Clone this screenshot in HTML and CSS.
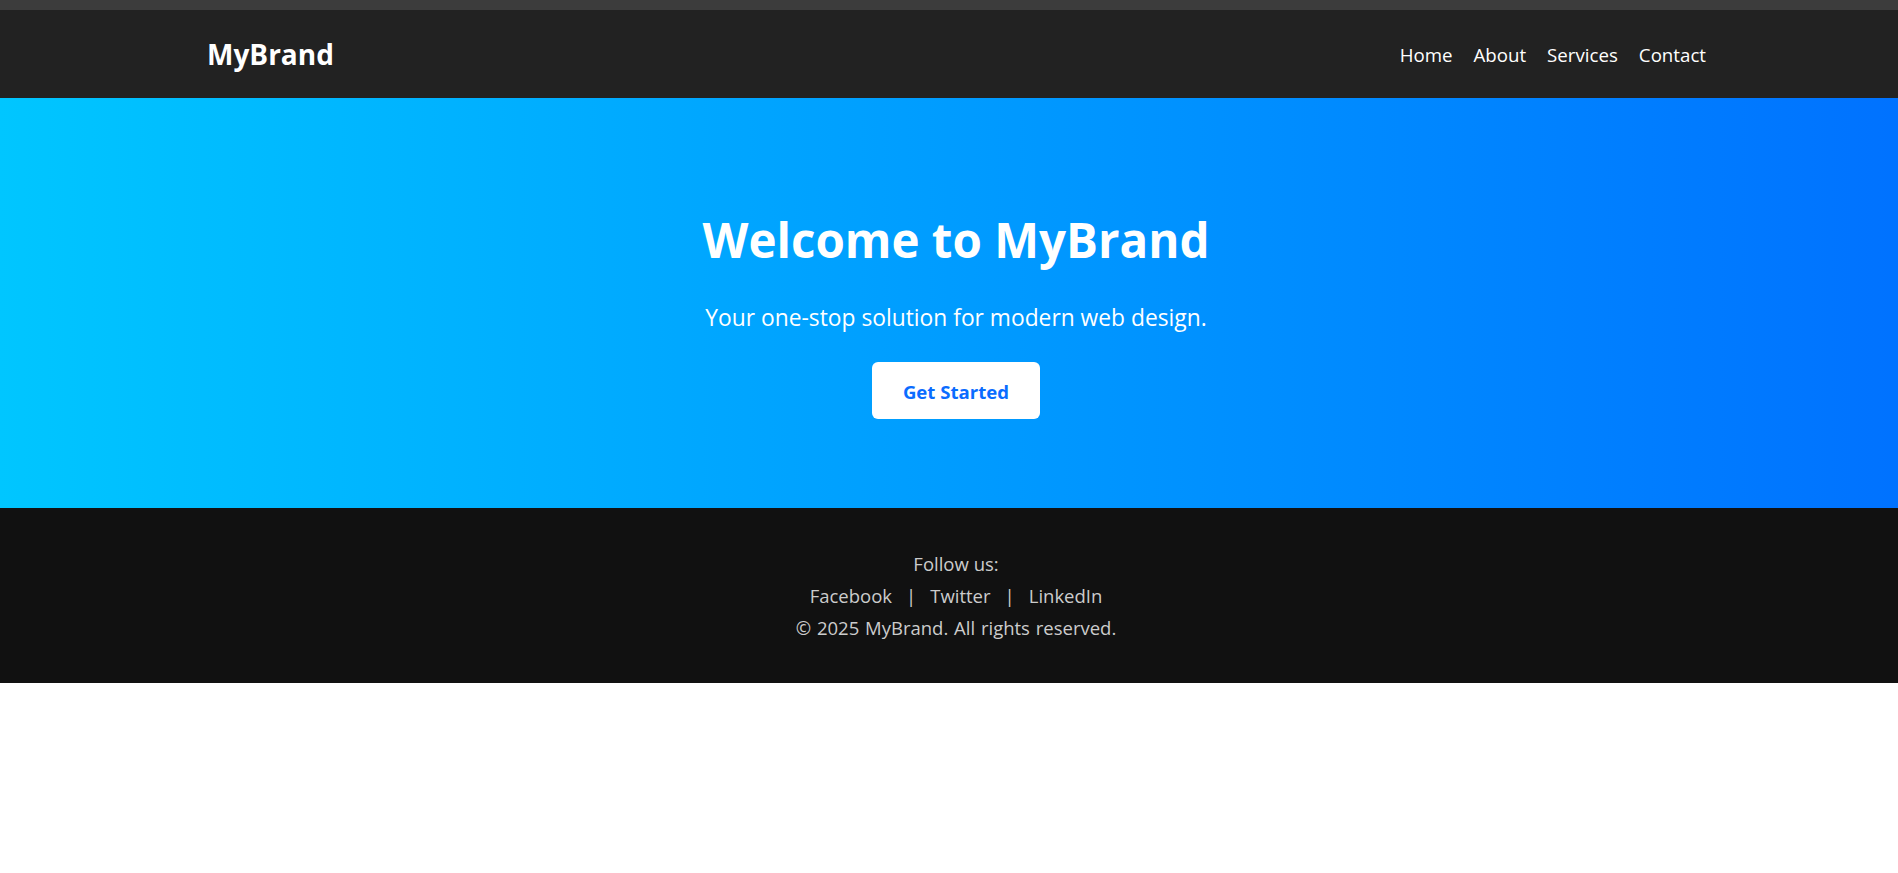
FILE: index.html
```html
<!DOCTYPE html>
<html lang="en">
<head>
<meta charset="utf-8">
<title>MyBrand</title>
<link rel="stylesheet" href="styles.css">
</head>
<body>
<div class="topstrip"></div>
<header class="site-header">
  <div class="logo">MyBrand</div>
  <nav class="nav">
    <a href="#">Home</a>
    <a href="#">About</a>
    <a href="#">Services</a>
    <a href="#">Contact</a>
  </nav>
</header>
<section class="hero">
  <h1 class="hero-title">Welcome to MyBrand</h1>
  <p class="hero-sub">Your one-stop solution for modern web design.</p>
  <a href="#" class="btn">Get Started</a>
</section>
<footer class="site-footer">
  <p class="footer-line">Follow us:</p>
  <p class="footer-line social">
    <a href="#">Facebook</a><span class="sep">|</span><a href="#">Twitter</a><span class="sep">|</span><a href="#">LinkedIn</a>
  </p>
  <p class="footer-line copyright">© 2025 MyBrand. All rights reserved.</p>
</footer>
</body>
</html>
```
FILE: styles.css
```css
* { box-sizing: border-box; }
html, body { margin: 0; padding: 0; }
body {
  font-family: "Open Sans", "Noto Sans", sans-serif;
  background: #ffffff;
  color: #ffffff;
}
a { text-decoration: none; color: inherit; }

.topstrip {
  height: 10px;
  background: #3c3c3c;
}

.site-header {
  height: 88px;
  background: #222222;
  display: flex;
  align-items: center;
  justify-content: space-between;
  padding: 0 192px 0 207px;
}
.logo {
  font-size: 28px;
  font-weight: 700;
  color: #ffffff;
}
.nav {
  display: flex;
  gap: 21px;
  font-size: 18.7px;
}
.nav a { color: #ffffff; }

.hero {
  background: linear-gradient(to right, #00c6ff, #0072ff);
  display: flex;
  flex-direction: column;
  align-items: center;
  text-align: center;
  padding: 113px 6px 89px 20px;
}
.hero-title {
  margin: 0;
  font-size: 47.5px;
  font-weight: 700;
  line-height: 57px;
}
.hero-sub {
  margin: 32.5px 0 0;
  font-size: 22.8px;
  line-height: 34px;
}
.btn {
  margin-top: 27.5px;
  display: inline-block;
  background: #ffffff;
  color: #0a6cff;
  font-weight: 700;
  font-size: 18.6px;
  line-height: 26px;
  padding: 16.5px 31px 14.5px;
  border-radius: 6px;
}

.site-footer {
  background: #111111;
  color: #cccccc;
  text-align: center;
  padding: 40px 6px 39px 20px;
  font-size: 18.5px;
}
.footer-line {
  margin: 0;
  line-height: 32px;
}
.social {
  display: flex;
  justify-content: center;
  gap: 14px;
}
.copyright { word-spacing: 1px; }
.sep { color: #cccccc; }
```
